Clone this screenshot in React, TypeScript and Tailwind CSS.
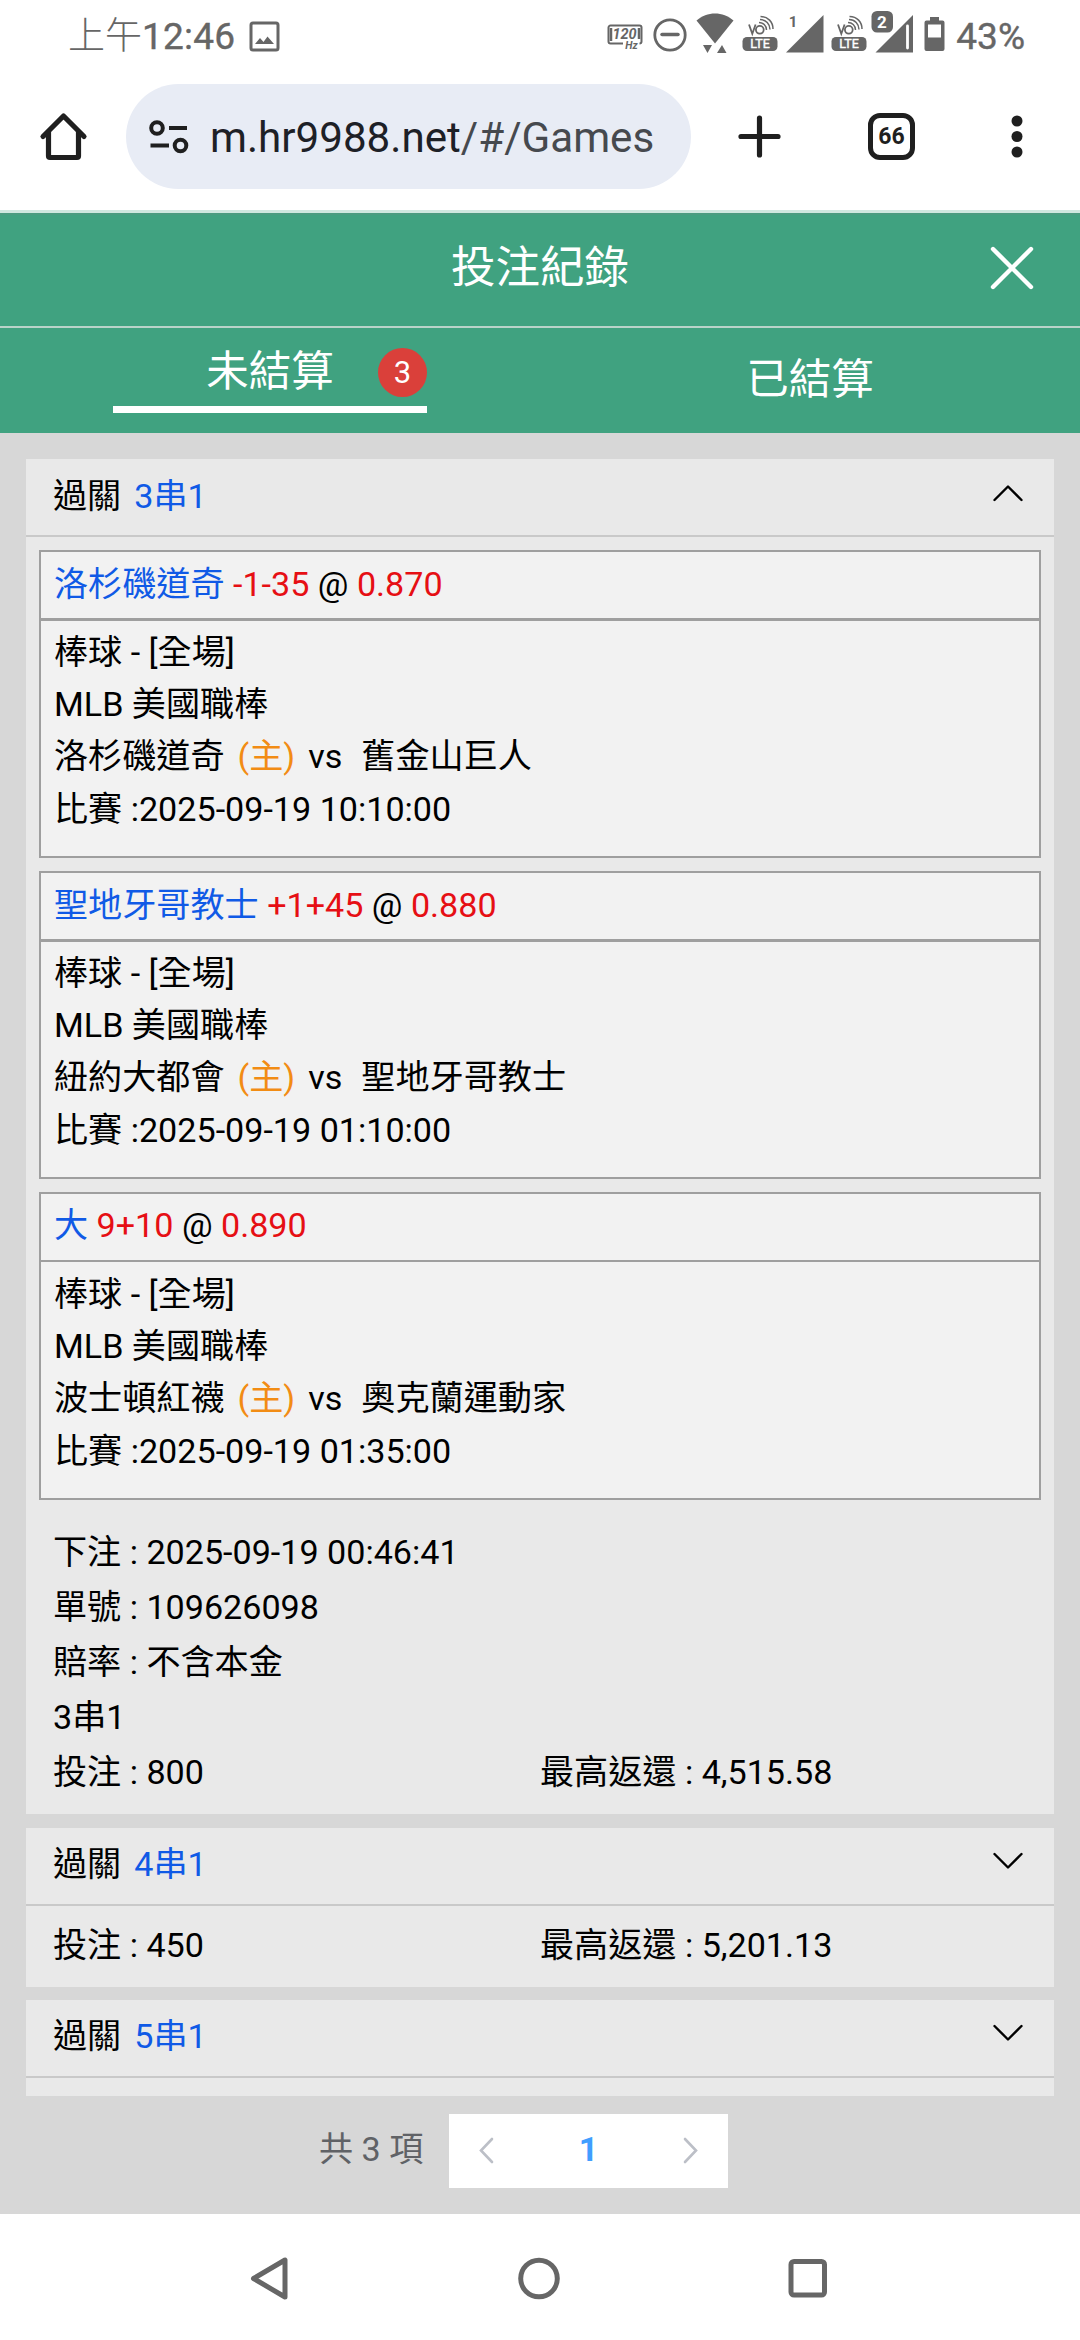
import React from 'react'

const bets = [
  { pick: '洛杉磯道奇', line: '-1-35', odds: '0.870', home: '洛杉磯道奇', away: '舊金山巨人', time: '2025-09-19 10:10:00' },
  { pick: '聖地牙哥教士', line: '+1+45', odds: '0.880', home: '紐約大都會', away: '聖地牙哥教士', time: '2025-09-19 01:10:00' },
  { pick: '大', line: '9+10', odds: '0.890', home: '波士頓紅襪', away: '奧克蘭運動家', time: '2025-09-19 01:35:00' }
]

const details = ['下注 : 2025-09-19 00:46:41', '單號 : 109626098', '賠率 : 不含本金', '3串1']

const VoLte = ({ className = '' }: { className?: string }) => (
  <svg className={className} width="36" height="40" viewBox="0 0 36 40" fill="none" stroke="#666" strokeWidth="1.8">
    <path d="M7 11.500l3.300 9.300 3.300-9.300" />
    <circle cx="17.800" cy="16.800" r="3.900" />
    <path d="M17 9.500c4 0 7.500 3 7.500 7.500M18 6.500c6 0 10 4.500 10 10M18.500 3.500c7.500 0 12.500 5.500 12.500 12.500" strokeWidth="1.500" />
    <rect x="0.500" y="24" width="35" height="14" rx="4.500" fill="#666" stroke="none" />
    <text x="18" y="35.200" fontSize="12.500" fill="#fff" stroke="#fff" strokeWidth="0.400" textAnchor="middle">LTE</text>
  </svg>
)

const StatusBar = () => (
  <div className="flex h-[84px] items-start justify-between pl-[68px] pr-[55px] text-[#666]">
    <div className="flex h-[72px] items-center text-[37px] leading-[73px]">
      <span className="font-light">上午</span>
      <span className="tracking-[0.2px] [-webkit-text-stroke:0.4px_#666]">12:46</span>
      <svg className="ml-[14px] mt-px" width="31" height="31" viewBox="0 0 31 31" fill="none">
        <rect x="2" y="2" width="27" height="27" rx="2" stroke="#666" strokeWidth="3" />
        <path d="M6 23l5-6 3.500 4 4-5.500L25 23z" fill="#666" />
      </svg>
    </div>
    <div className="flex h-[72px] items-start">
      <svg className="mt-[23px]" width="36" height="28" viewBox="0 0 36 28" fill="none">
        <path d="M16 20.500H3.500a2 2 0 0 1-2-2v-14a2 2 0 0 1 2-2h29a2 2 0 0 1 2 2v14a2 2 0 0 1-2 2" stroke="#666" strokeWidth="2" />
        <path d="M4 5v13M32 5v11" stroke="#666" strokeWidth="2.500" />
        <text x="17.500" y="16" fontSize="14.500" fontWeight="700" fontStyle="italic" fill="#666" textAnchor="middle">120</text>
        <text x="24.500" y="26" fontSize="10.500" fontWeight="700" fontStyle="italic" fill="#666" textAnchor="middle">Hz</text>
      </svg>
      <svg className="ml-[10px] mt-[18px]" width="34" height="34" viewBox="0 0 34 34" fill="none" stroke="#666">
        <circle cx="17" cy="17" r="15.200" strokeWidth="2.800" />
        <path d="M9 16.500h16" strokeWidth="3.500" strokeLinecap="round" />
      </svg>
      <svg className="ml-[9px] mt-[13px]" width="38" height="41" viewBox="0 0 38 41" fill="#666">
        <path d="M0.500 7.500C11-2 27-2 37.500 7.500L19 30.500z" />
        <path d="M7 32h9l-4.500 8zM21 40h9.500L26 32z" />
      </svg>
      <VoLte className="ml-[8px] mt-[13px]" />
      <svg className="ml-[7px] mt-[10px]" width="40" height="43" viewBox="0 0 40 43" fill="#666">
        <path d="M1 42.500L38.500 5v37.500z" />
        <text x="8" y="17" fontSize="15" fontWeight="700" textAnchor="middle">1</text>
      </svg>
      <VoLte className="ml-[6px] mt-[13px]" />
      <svg className="ml-[4px] mt-[10px]" width="43" height="43" viewBox="0 0 43 43" fill="#666">
        <path d="M4.500 42.500L42 5v37.500z" />
        <path d="M36.500 16v22" stroke="#fff" strokeWidth="2.800" strokeLinecap="round" />
        <rect x="-1" y="0" width="25" height="24" rx="6" fill="#fff" />
        <rect x="0.500" y="1" width="21.500" height="21.500" rx="5.500" />
        <text x="11" y="17.500" fontSize="17" fontWeight="700" fill="#fff" textAnchor="middle">2</text>
      </svg>
      <svg className="ml-[10px] mt-[17px]" width="21" height="35" viewBox="0 0 21 35" fill="#666">
        <path fillRule="evenodd" d="M6 0h9v3.500h3.500q2 0 2 2V32q0 2-2 2H2.500q-2 0-2-2V5.500q0-2 2-2H6zM4 7.500V20.500h13V7.500z" />
      </svg>
      <span className="ml-[11px] text-[37px] leading-[73px] [-webkit-text-stroke:0.4px_#666]">43%</span>
    </div>
  </div>
)

const BrowserBar = () => (
  <div className="flex h-[126px] items-start pl-[39px]">
    <svg className="mt-[27px]" width="50" height="50" viewBox="0 0 50 50" fill="none" stroke="#1f1f1f" strokeWidth="5.200" strokeLinecap="round" strokeLinejoin="round">
      <path d="M4 25.500L24.500 5 45 25.500" />
      <path d="M9.500 21v24q0 1.500 1.500 1.500h27q1.500 0 1.500-1.500V21" />
    </svg>
    <div className="ml-[37px] flex h-[105px] w-[565px] items-center rounded-full bg-[#e8ecf5] pl-[23px]">
      <svg width="40" height="36" viewBox="0 0 40 36" fill="none" stroke="#1f1f1f" strokeWidth="4">
        <circle cx="8" cy="9" r="5.800" />
        <path d="M20 9h18M1.500 26.500H20" />
        <circle cx="31.500" cy="26.500" r="5.800" />
      </svg>
      <span className="ml-[21px] whitespace-nowrap pt-[2px] text-[42.150px] leading-[60px] text-[#1d2026]">
        m.hr9988.net<span className="text-[#46494e]">/#/Games</span>
      </span>
    </div>
    <svg className="ml-[46px] mt-[30px]" width="44" height="44" viewBox="0 0 44 44" stroke="#1f1f1f" strokeWidth="5.200" strokeLinecap="round">
      <path d="M22.500 4v37M4 22.500h37" />
    </svg>
    <div className="ml-[87px] mt-[29px] flex h-[47px] w-[47px] items-center justify-center rounded-[12px] border-[5px] border-[#1f1f1f] text-[23px] leading-none font-bold text-[#1f1f1f]">
      66
    </div>
    <svg className="ml-[96px] mt-[30px]" width="12" height="46" viewBox="0 0 12 46" fill="#1f1f1f">
      <circle cx="6" cy="7" r="5.500" />
      <circle cx="6" cy="22.500" r="5.500" />
      <circle cx="6" cy="38" r="5.500" />
    </svg>
  </div>
)

const Chevron = ({ up = false }: { up?: boolean }) => (
  <svg width="32" height="18" viewBox="0 0 32 18" fill="none" stroke="#000" strokeWidth="2.400" strokeLinecap="round" strokeLinejoin="round">
    <path d={up ? 'M2.500 16L16 2.500 29.500 16' : 'M2.500 2L16 15.500 29.500 2'} />
  </svg>
)

const CardHeader = ({ title, open = false }: { title: string; open?: boolean }) => (
  <div className="flex h-[78px] items-center justify-between border-b-2 border-[#c9c9c9] pr-[30px] pb-[2px] pl-[27px]">
    <div className={open ? '' : 'pb-[2px]'}>
      過關<span className="ml-[13px] text-[#105ae6]">{title}</span>
    </div>
    <div className={open ? 'pb-[6px]' : 'pb-[8px]'}>
      <Chevron up={open} />
    </div>
  </div>
)

const Totals = ({ stake, payout }: { stake: string; payout: string }) => (
  <div className="grid grid-cols-2">
    <div>投注 : {stake}</div>
    <div>最高返還 : {payout}</div>
  </div>
)

export default function App() {
  return (
    <div className="flex h-[2340px] w-[1080px] flex-col overflow-hidden bg-white font-[Roboto,'Noto_Sans_CJK_TC',sans-serif]">
      <StatusBar />
      <BrowserBar />

      <header className="h-[223px] border-t-[3px] border-[#cfe8df] bg-[#40a280] text-white">
        <div className="grid h-[115px] grid-cols-3 items-center border-t-2 border-b-2 border-t-[#4b9c80] border-b-[#b9d3c9] pb-[5px]">
          <h1 className="col-start-2 text-center text-[44.500px] leading-[60px]">投注紀錄</h1>
          <svg className="mr-[45px] justify-self-end" width="46" height="46" viewBox="0 0 46 46" stroke="#fff" strokeWidth="4.400" strokeLinecap="round">
            <path d="M4 4l38 38M42 4L4 42" />
          </svg>
        </div>
        <div className="grid h-[105px] grid-cols-2 text-[42.500px]">
          <div className="relative mx-[113px] h-[85px] border-b-[7px] border-white text-center leading-[88px]">
            未結算
            <span className="absolute top-[20px] right-0 flex size-[49px] items-center justify-center rounded-full bg-[#da403a] text-[31px] leading-none">3</span>
          </div>
          <div className="text-center leading-[103px]">已結算</div>
        </div>
      </header>

      <main className="flex h-[1781px] flex-col bg-[#d7d7d7] px-[26px] pt-[26px] text-[34.125px] leading-[52.500px] text-black">
        <div className="h-[1637px] overflow-hidden">
          <section className="mb-[14px] h-[1355px] bg-[#e9e9e9]">
            <CardHeader title="3串1" open />
            <div className="flex flex-col gap-[13px] px-[13px] pt-[13px]">
              {bets.map((bet, index) => (
                <div key={index} className="group h-[308px] border-2 border-[#9f9f9f] bg-[#f2f2f2]">
                  <div className="h-[69px] border-b-[3px] border-[#9f9f9f] px-[13px] leading-[65px] group-last:h-[68px] group-last:border-b-2 group-last:leading-[63px]">
                    <span className="text-[#105ae6]">{bet.pick}</span> <span className="text-[#e60f14]">{bet.line}</span> @ <span className="text-[#e60f14]">{bet.odds}</span>
                  </div>
                  <div className="px-[13px] pt-[5px] leading-[52.200px] group-last:pt-[6px]">
                    <div>棒球 - [全場]</div>
                    <div>MLB 美國職棒</div>
                    <div className="flex">
                      <span>{bet.home}</span>
                      <span className="mx-[13px] text-[#f28c14]">(主)</span>
                      <span>vs</span>
                      <span className="ml-[19px]">{bet.away}</span>
                    </div>
                    <div>比賽 :{bet.time}</div>
                  </div>
                </div>
              ))}
            </div>
            <div className="px-[27px] pt-[25px] leading-[55px]">
              {details.map((text) => (
                <div key={text}>{text}</div>
              ))}
              <Totals stake="800" payout="4,515.58" />
            </div>
          </section>

          <section className="mb-[13px] h-[159px] bg-[#e9e9e9]">
            <CardHeader title="4串1" />
            <div className="px-[27px] pt-[13px]">
              <Totals stake="450" payout="5,201.13" />
            </div>
          </section>

          <section className="h-[159px] bg-[#e9e9e9]">
            <CardHeader title="5串1" />
          </section>
        </div>

        <div className="mt-[18px] flex h-[74px] items-center pl-[293px] text-[#606266]">
          <span className="w-[104px] whitespace-nowrap pb-[3px]">共 3 項</span>
          <div className="ml-[26px] flex h-[74px] w-[279px] items-center justify-between bg-white px-[28px]">
            <svg width="18" height="28" viewBox="0 0 18 28" fill="none" stroke="#bcbfc7" strokeWidth="2.600" strokeLinecap="round">
              <path d="M15 2L4 13.500 15 25" />
            </svg>
            <span className="pb-[3px] font-bold text-[#409eff]">1</span>
            <svg width="18" height="28" viewBox="0 0 18 28" fill="none" stroke="#bcbfc7" strokeWidth="2.600" strokeLinecap="round">
              <path d="M3 2l11 11.500L3 25" />
            </svg>
          </div>
        </div>
      </main>

      <nav className="flex h-[126px] items-center justify-between pt-[2px] pr-[252px] pl-[249px]">
        <svg width="40" height="44" viewBox="0 0 40 44" fill="none" stroke="#666" strokeWidth="5" strokeLinejoin="round">
          <path d="M36 4v37L4.500 22.500z" />
        </svg>
        <svg width="44" height="44" viewBox="0 0 44 44" fill="none" stroke="#666" strokeWidth="5">
          <circle cx="22" cy="22.500" r="18.300" />
        </svg>
        <svg width="40" height="44" viewBox="0 0 40 44" fill="none" stroke="#666" strokeWidth="5">
          <rect x="3" y="5.500" width="33.500" height="33.500" rx="3" />
        </svg>
      </nav>
    </div>
  )
}
